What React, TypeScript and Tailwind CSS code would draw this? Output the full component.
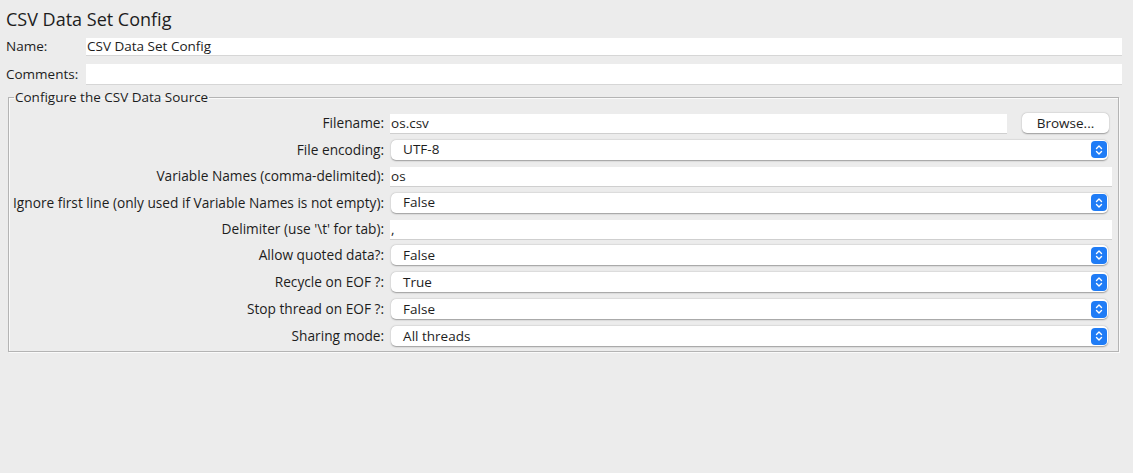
const font = { fontFamily: '"Open Sans", "Liberation Sans", Arial, sans-serif' }

type Row =
  | { label: string; kind: 'file'; value: string }
  | { label: string; kind: 'text'; value: string }
  | { label: string; kind: 'select'; value: string }

const rows: Row[] = [
  { label: 'Filename:', kind: 'file', value: 'os.csv' },
  { label: 'File encoding:', kind: 'select', value: 'UTF-8' },
  { label: 'Variable Names (comma-delimited):', kind: 'text', value: 'os' },
  { label: 'Ignore first line (only used if Variable Names is not empty):', kind: 'select', value: 'False' },
  { label: "Delimiter (use '\\t' for tab):", kind: 'text', value: ',' },
  { label: 'Allow quoted data?:', kind: 'select', value: 'False' },
  { label: 'Recycle on EOF ?:', kind: 'select', value: 'True' },
  { label: 'Stop thread on EOF ?:', kind: 'select', value: 'False' },
  { label: 'Sharing mode:', kind: 'select', value: 'All threads' },
]

function Stepper() {
  return (
    <span className="flex h-[17px] w-[16px] items-center justify-center rounded-[4px] bg-[#1f7cf6]">
      <svg width="8" height="12" viewBox="0 0 8 12" fill="none" stroke="white" strokeWidth="1.4" strokeLinecap="round" strokeLinejoin="round">
        <path d="M1.5 4.5 L4 2 L6.5 4.5" />
        <path d="M1.5 7.5 L4 10 L6.5 7.5" />
      </svg>
    </span>
  )
}

function TextField({ value, className = '' }: { value: string; className?: string }) {
  return (
    <div className={`flex h-[19px] items-center bg-white pl-[1px] text-[13.5px] leading-[17px] text-[#1d1d1d] shadow-[0_1px_0_#cfcfcf] ${className}`}>
      {value}
    </div>
  )
}

function SelectField({ value }: { value: string }) {
  return (
    <div className="ml-[1px] mr-[4px] flex h-[20px] items-center justify-between rounded-[5px] bg-white pl-[12px] pr-[1px] text-[13.5px] leading-[17px] text-[#1d1d1d] shadow-[0_0.5px_1.5px_rgba(0,0,0,0.35)]">
      <span>{value}</span>
      <Stepper />
    </div>
  )
}

export default function App() {
  return (
    <div className="min-h-screen w-full bg-[#ececec] pl-[6px] pr-[11px] pt-[8px] text-[#1d1d1d]" style={font}>
      <h1 className="h-[22px] text-[18px] leading-[22px]">CSV Data Set Config</h1>

      <div className="mt-[8px] flex items-center">
        <span className="w-[80px] text-[13.5px] leading-[17px]">Name:</span>
        <div className="flex h-[17px] flex-1 items-center bg-white pl-[1px] text-[13.5px] leading-[17px] shadow-[0_1px_0_#d6d6d6]">CSV Data Set Config</div>
      </div>
      <div className="mt-[9px] flex items-center">
        <span className="w-[80px] text-[13.5px] leading-[17px]">Comments:</span>
        <div className="h-[20px] flex-1 bg-white shadow-[0_1px_0_#d6d6d6]" />
      </div>

      <fieldset className="ml-[2px] mr-[3px] mt-[5px] border border-[#b4b4b4] pb-[5px] pl-[4px] pr-[6px] pt-[7px] shadow-[inset_1px_1px_0_#fafafa,1px_1px_0_#fafafa]">
        <legend className="ml-[1px] px-[1px] text-[13.5px] leading-[17px]">Configure the CSV Data Source</legend>
        <div className="grid grid-cols-[max-content_1fr] items-center gap-x-[6px] gap-y-[6.9px]">
          {rows.map((r) => (
            <div key={r.label} className="contents">
              <span className="text-right text-[13.7px] leading-[18px]">{r.label}</span>
              {r.kind === 'file' && (
                <div className="flex items-center gap-[15px]">
                  <TextField value={r.value} className="flex-1" />
                  <button className="mr-[3px] h-[20px] w-[87px] rounded-[5px] bg-white text-[13.5px] leading-[17px] shadow-[0_0.5px_1.5px_rgba(0,0,0,0.35)]">
                    Browse...
                  </button>
                </div>
              )}
              {r.kind === 'text' && <TextField value={r.value} />}
              {r.kind === 'select' && <SelectField value={r.value} />}
            </div>
          ))}
        </div>
      </fieldset>
    </div>
  )
}
